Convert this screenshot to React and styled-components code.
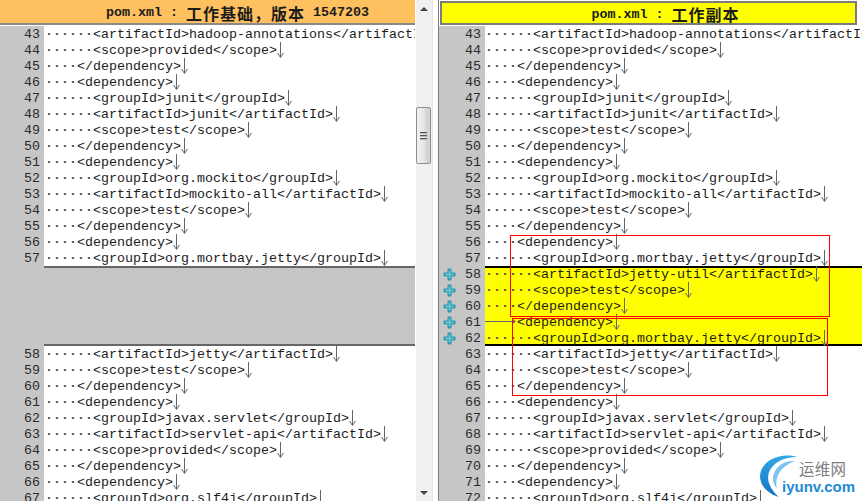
import React from "react";
import styled, { createGlobalStyle } from "styled-components";

const GlobalStyle = createGlobalStyle`
  html, body {
    margin: 0;
    padding: 0;
    width: 862px;
    height: 501px;
    overflow: hidden;
    background: #fff;
  }
`;

const MONO = `"Liberation Mono", "Noto Sans CJK SC", monospace`;

const Page = styled.div`
  position: relative;
  display: flex;
  width: 862px;
  height: 501px;
  overflow: hidden;
  background: #fff;
  font-family: ${MONO};
  font-size: 13.33px;
  color: #1c1c1c;
`;

const LeftPane = styled.div`
  width: 415px;
  flex: none;
  overflow: hidden;
`;

const RightPane = styled.div`
  flex: 1;
  min-width: 0;
  overflow: hidden;
  border-left: 1px solid #7c7c7c;
`;

const Header = styled.div`
  box-sizing: border-box;
  display: flex;
  align-items: center;
  justify-content: center;
  height: ${(p) => p.$height}px;
  margin: ${(p) => p.$margin};
  padding-top: 2px;
  padding-left: ${(p) => p.$shift}px;
  background: ${(p) => p.$color};
  border: ${(p) => p.$border};
  font-weight: bold;
  white-space: pre;
`;

const HeaderCjk = styled.span`
  font-size: 16px;
  letter-spacing: 1px;
  font-family: "Noto Sans CJK SC", sans-serif;
`;

const Rows = styled.div`
  height: 480px;
`;

const Row = styled.div`
  display: flex;
  height: 16px;
  line-height: 18px;
`;

const Gutter = styled.div`
  box-sizing: border-box;
  flex: none;
  display: flex;
  align-items: flex-start;
  justify-content: flex-end;
  width: ${(p) => p.$width}px;
  padding-right: 4px;
  background: #c6c6c6;
  color: #2b2b2b;
  overflow: hidden;
`;

const PlusSlot = styled.span`
  display: flex;
  margin: 2px auto 0 4px;
`;

const Code = styled.div`
  flex: 1;
  min-width: 0;
  display: flex;
  padding-left: ${(p) => p.$pad}px;
  white-space: pre;
  overflow: hidden;
  background: ${(p) => (p.$changed ? "#ffff00" : "#fff")};
  box-shadow: ${(p) =>
    p.$edge === "top"
      ? "inset 0 2px 0 #000"
      : p.$edge === "bottom"
        ? "inset 0 -2px 0 #000"
        : "none"};
`;

const Dots = styled.span`
  color: #4a4a4a;
  font-weight: bold;
`;

const GapRow = styled.div`
  display: flex;
  height: 80px;
`;

const GapFill = styled.div`
  box-sizing: border-box;
  flex: 1;
  background: #c6c6c6;
  border-top: 2px solid #666;
  border-bottom: 2px solid #666;
`;

const Scrollbar = styled.div`
  position: relative;
  flex: none;
  box-sizing: border-box;
  width: 17px;
  height: 501px;
  margin: 0 5px 0 1px;
  background: #f0f0f0;
  border-right: 1px solid #e6e6e6;
`;

const Thumb = styled.div`
  position: absolute;
  top: 107px;
  left: 0;
  box-sizing: border-box;
  display: flex;
  flex-direction: column;
  align-items: center;
  justify-content: center;
  gap: 2px;
  width: 15px;
  height: 57px;
  border: 1px solid #8e8f8f;
  border-radius: 2px;
  background: linear-gradient(to right, #f3f3f3 0%, #e8e8e8 45%, #cfcfd2 85%, #d8d8d8 100%);
`;

const Grip = styled.span`
  width: 7px;
  height: 1px;
  background: #555;
  box-shadow: 0 1px 0 #bbb;
`;

const ScrollArrow = styled.span`
  position: absolute;
  left: 4px;
  ${(p) => (p.$down ? "bottom: 6px;" : "top: 7px;")}
  width: 0;
  height: 0;
  border-left: 4px solid transparent;
  border-right: 4px solid transparent;
  ${(p) => (p.$down ? "border-top: 4px solid #444;" : "border-bottom: 4px solid #444;")}
`;

const MarkBox = styled.div`
  position: absolute;
  box-sizing: border-box;
  left: ${(p) => p.$left}px;
  top: ${(p) => p.$top}px;
  width: ${(p) => p.$width}px;
  height: ${(p) => p.$height}px;
  border: 1px solid ${(p) => p.$color};
  pointer-events: none;
`;

const Watermark = styled.div`
  position: absolute;
  left: 755px;
  top: 450px;
  width: 107px;
  height: 51px;
`;

const SwooshLogo = styled.svg`
  position: absolute;
  left: 0;
  top: 0;
`;

const BrandName = styled.div`
  position: absolute;
  left: 44px;
  top: 9px;
  font-family: "Noto Sans CJK SC", sans-serif;
  font-size: 15.5px;
  line-height: 18px;
  letter-spacing: 0.2px;
  color: #7d7d7d;
  text-shadow: 0 0 2px #fff, 0 0 2px #fff;
`;

const BrandDomain = styled.div`
  position: absolute;
  left: 27px;
  top: 28px;
  font-family: "Liberation Sans", sans-serif;
  font-weight: bold;
  font-size: 15px;
  line-height: 17px;
  color: #1d8ad6;
  text-shadow: 0 0 2px #fff, 0 0 2px #fff, 0 0 2px #fff;
`;

function EndArrow() {
  return (
    <svg width="8" height="16" viewBox="0 0 8 16" style={{ flex: "none" }}>
      <path d="M3.5 0V15M0.5 11L3.5 15.5L6.5 11" fill="none" stroke="#666" strokeWidth="1" />
    </svg>
  );
}

function PlusIcon() {
  return (
    <svg width="13" height="13" viewBox="0 0 13 13">
      <path
        d="M4.5 1.5a1 1 0 0 1 1-1h2a1 1 0 0 1 1 1v3h3a1 1 0 0 1 1 1v2a1 1 0 0 1-1 1h-3v3a1 1 0 0 1-1 1h-2a1 1 0 0 1-1-1v-3h-3a1 1 0 0 1-1-1v-2a1 1 0 0 1 1-1h3z"
        fill="#2f98b4"
      />
      <path d="M6.5 2.5v8M2.5 6.5h8" stroke="#6fcbdc" strokeWidth="1.5" />
    </svg>
  );
}

function Connector() {
  return (
    <svg width="32" height="16" viewBox="0 0 32 16" style={{ flex: "none" }}>
      <path d="M0 7.5H29" stroke="#666" strokeWidth="1" />
      <path d="M27 4.5L31 7.5L27 10.5z" fill="#666" />
    </svg>
  );
}

const baseLines = [
  [6, "<artifactId>hadoop-annotations</artifactId>"],
  [6, "<scope>provided</scope>"],
  [4, "</dependency>"],
  [4, "<dependency>"],
  [6, "<groupId>junit</groupId>"],
  [6, "<artifactId>junit</artifactId>"],
  [6, "<scope>test</scope>"],
  [4, "</dependency>"],
  [4, "<dependency>"],
  [6, "<groupId>org.mockito</groupId>"],
  [6, "<artifactId>mockito-all</artifactId>"],
  [6, "<scope>test</scope>"],
  [4, "</dependency>"],
  [4, "<dependency>"],
  [6, "<groupId>org.mortbay.jetty</groupId>"],
];

const tailLines = [
  [6, "<artifactId>jetty</artifactId>"],
  [6, "<scope>test</scope>"],
  [4, "</dependency>"],
  [4, "<dependency>"],
  [6, "<groupId>javax.servlet</groupId>"],
  [6, "<artifactId>servlet-api</artifactId>"],
  [6, "<scope>provided</scope>"],
  [4, "</dependency>"],
  [4, "<dependency>"],
  [6, "<groupId>org.slf4j</groupId>"],
];

const addedLines = [
  [6, "<artifactId>jetty-util</artifactId>"],
  [6, "<scope>test</scope>"],
  [4, "</dependency>"],
  [4, "<dependency>"],
  [6, "<groupId>org.mortbay.jetty</groupId>"],
];

function CodeRow({ num, indent, text, gutter, pad, changed, edge, connector }) {
  return (
    <Row>
      <Gutter $width={gutter}>
        {changed && (
          <PlusSlot>
            <PlusIcon />
          </PlusSlot>
        )}
        {num}
      </Gutter>
      <Code $pad={pad} $changed={changed} $edge={edge}>
        {connector ? <Connector /> : <Dots>{"·".repeat(indent)}</Dots>}
        {text}
        <EndArrow />
      </Code>
    </Row>
  );
}

function App() {
  return (
    <Page>
      <GlobalStyle />
      <LeftPane>
        <Header
          $height={25}
          $margin="0 0 1px"
          $shift={60}
          $color="#ffc05f"
          $border="none; border-bottom: 2px solid #8a8a8a"
        >
          pom.xml : <HeaderCjk>工作基础，版本</HeaderCjk> 1547203
        </Header>
        <Rows>
          {baseLines.map(([indent, text], i) => (
            <CodeRow key={i} num={43 + i} indent={indent} text={text} gutter={44} pad={1} />
          ))}
          <GapRow>
            <Gutter $width={44} />
            <GapFill />
          </GapRow>
          {tailLines.map(([indent, text], i) => (
            <CodeRow key={i} num={58 + i} indent={indent} text={text} gutter={44} pad={1} />
          ))}
        </Rows>
      </LeftPane>
      <Scrollbar>
        <ScrollArrow />
        <Thumb>
          <Grip />
          <Grip />
          <Grip />
        </Thumb>
        <ScrollArrow $down />
      </Scrollbar>
      <RightPane>
        <Header
          $height={24}
          $margin="1px 5px 1px 1px"
          $shift={34}
          $color="#ffff00"
          $border="2px solid #7c7c7c"
        >
          pom.xml : <HeaderCjk>工作副本</HeaderCjk>
        </Header>
        <Rows>
          {baseLines.map(([indent, text], i) => (
            <CodeRow key={i} num={43 + i} indent={indent} text={text} gutter={46} pad={0} />
          ))}
          {addedLines.map(([indent, text], i) => (
            <CodeRow
              key={i}
              num={58 + i}
              indent={indent}
              text={text}
              gutter={46}
              pad={0}
              changed
              edge={i === 0 ? "top" : i === 4 ? "bottom" : undefined}
              connector={i === 3}
            />
          ))}
          {tailLines.map(([indent, text], i) => (
            <CodeRow key={i} num={63 + i} indent={indent} text={text} gutter={46} pad={0} />
          ))}
        </Rows>
      </RightPane>

      <MarkBox $left={510} $top={235} $width={320} $height={82} $color="#f00" />
      <MarkBox $left={512} $top={318} $width={316} $height={78} $color="#f00" />

      <Watermark>
        <SwooshLogo width="50" height="51" viewBox="0 0 50 51">
          <defs>
            <linearGradient id="swoosh" x1="0" y1="0" x2="0" y2="1">
              <stop offset="0" stopColor="#35a7e6" />
              <stop offset="1" stopColor="#1272c4" />
            </linearGradient>
          </defs>
          <path
            d="M42 7C26 2 6 10 5 26C5 36 13 44 24 47C16 40 11 31 14 22C18 12 30 7 42 7Z"
            fill="url(#swoosh)"
          />
          <path
            d="M40 11C28 10 18 18 18 29C18 33 20 36 22 39C20 30 22 18 40 11Z"
            fill="#7cc4ef"
          />
        </SwooshLogo>
        <BrandName>运维网</BrandName>
        <BrandDomain>iyunv.com</BrandDomain>
      </Watermark>
    </Page>
  );
}

export default App;
